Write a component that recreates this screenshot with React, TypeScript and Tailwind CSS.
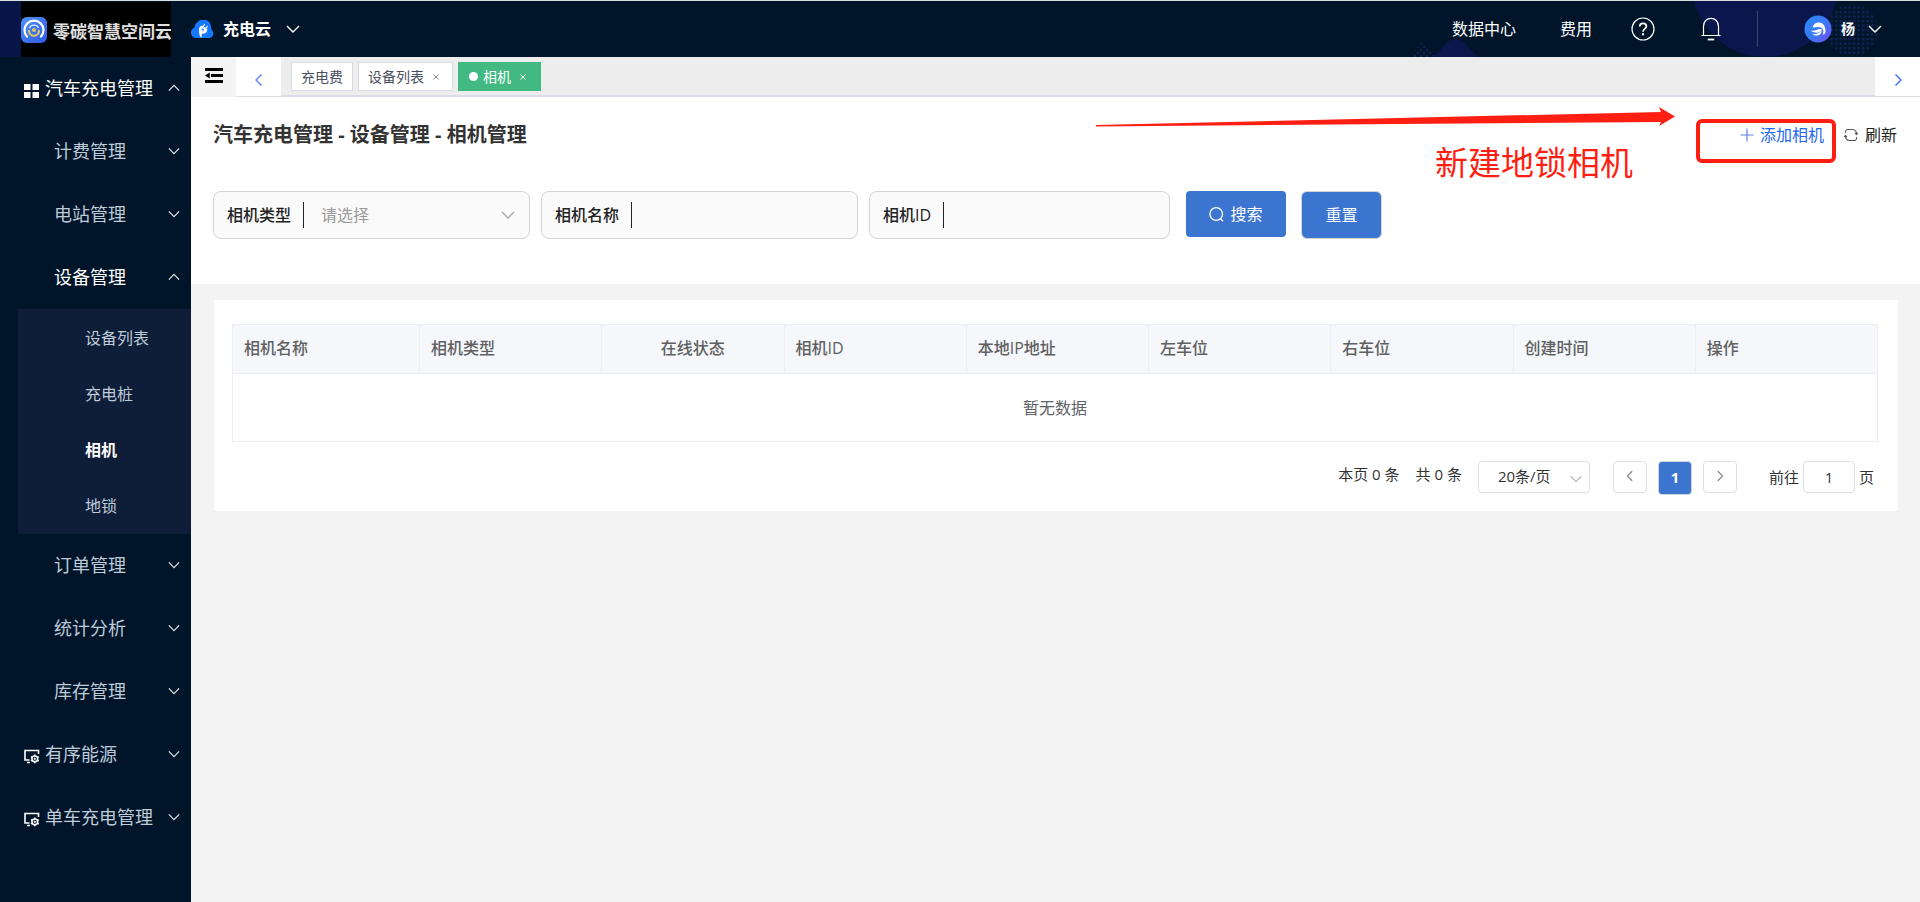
import type { ReactNode } from "react";

type IconProps = { className?: string };

function Chevron({ dir = "down", className = "" }: IconProps & { dir?: "down" | "up" | "left" | "right" }) {
  const d = {
    down: "M1 4 7 10l6-6",
    up: "M1 10 7 4l6 6",
    left: "M9.5 1.5 4 7l5.5 5.5",
    right: "M4.5 1.5 10 7l-5.5 5.5",
  }[dir];
  return (
    <svg viewBox="0 0 14 14" fill="none" stroke="currentColor" strokeWidth="1.4" className={className} aria-hidden="true">
      <path d={d} />
    </svg>
  );
}

function BrandMark() {
  return (
    <svg viewBox="0 0 26 26" className="size-[26px] shrink-0" aria-hidden="true">
      <defs>
        <linearGradient id="brand" x1="0" y1="0" x2="1" y2="1">
          <stop offset="0" stopColor="#4f93f8" />
          <stop offset="1" stopColor="#2f5be6" />
        </linearGradient>
      </defs>
      <rect width="26" height="26" rx="6" fill="url(#brand)" />
      <path d="M6 19.600A9.5 9.5 0 1 1 20 19.600" fill="none" stroke="#fff" strokeWidth="2.200" strokeLinecap="round" />
      <path d="M8.400 11a5.200 5.200 0 0 1 9.200 0" fill="none" stroke="#dfe8ff" strokeWidth="1.300" />
      <path d="M8 13.800a5 5 0 0 0 10 0" fill="none" stroke="#e8c55c" strokeWidth="2.200" strokeLinecap="round" />
      <circle cx="13" cy="13" r="1.900" fill="#f0c954" />
    </svg>
  );
}

function CloudPlug() {
  return (
    <svg viewBox="0 0 23 19" className="h-[19px] w-[23px] shrink-0" aria-hidden="true">
      <path d="M5.500 18A5.300 5.300 0 0 1 3.300 7.800 C4 4.500 5 3 6.500 2.300 A7.500 7.500 0 0 1 19.800 5.800 C20 8.500 20.500 9.500 21.700 11.200 A4.500 4.500 0 0 1 18.500 18Z" fill="#1677ff" />
      <path d="M8 9.500c0-2.700 1.800-4.100 3.900-3.700l4.300 2.900c.4 3-1.600 5.100-3.800 4.800-1.600-.2-1.800.6-1.800 4.200-1.800-.7-2.600-4-2.600-8.200Z" fill="#fff" />
      <path d="m12.500 6 1.300-2m1.400 4 1.500-2" stroke="#fff" strokeWidth="1.200" fill="none" />
      <path d="m12.600 7.400-1.800 2.100 1.900.1-1.200 1.800" stroke="#1677ff" strokeWidth=".8" fill="none" />
    </svg>
  );
}

function HelpIcon() {
  return (
    <svg viewBox="0 0 24 24" className="size-6" fill="none" stroke="#fff" strokeWidth="1.200" aria-hidden="true">
      <circle cx="12" cy="12" r="11" />
      <path d="M8.700 9.500C8.700 7.500 10 6.300 12 6.300s3.400 1.200 3.400 3c0 2.500-3.400 2.700-3.400 5.400" strokeWidth="1.700" />
      <circle cx="12" cy="17.300" r=".6" fill="#fff" />
    </svg>
  );
}

function BellIcon() {
  return (
    <svg viewBox="0 0 20 24" className="h-6 w-5" fill="none" stroke="#fff" strokeWidth="1.200" aria-hidden="true">
      <path d="M2.500 18.500V9.500C2.500 4.500 5.800 1.300 10 1.300s7.500 3.200 7.500 8.200v9M.5 18.500h19" />
      <path d="M6.700 22.500h6.600" strokeWidth="1.800" />
    </svg>
  );
}

function Avatar() {
  return (
    <svg viewBox="0 0 28 28" className="size-7" aria-hidden="true">
      <defs>
        <linearGradient id="avatar" x1="0" y1="0" x2="1" y2=".8">
          <stop offset="0" stopColor="#2d8bfa" />
          <stop offset=".6" stopColor="#3b78f8" />
          <stop offset="1" stopColor="#6c52f0" />
        </linearGradient>
      </defs>
      <circle cx="14" cy="14" r="13.500" fill="url(#avatar)" />
      <path d="M8.500 12.500C9.500 9 12 7.300 15 7.500c4.500.2 6.800 4 6.500 9.500-.4 1.900-1.500 2.500-2.600 2.500 1-3.500.5-6-1.900-7-2.500-1-5-.6-8.500 0Z" fill="#fff" />
      <path d="M6.500 15.500c4.500 1.300 7.500-2.500 11.500-1.200-1 3.500-6.500 5-11.500 1.200Z" fill="#fff" />
      <path d="M8 19c3.500.9 7-.6 9.500-3.300.8 3.500-4.500 6.800-9.500 3.300Z" fill="#fff" />
    </svg>
  );
}

function GridIcon() {
  return (
    <svg viewBox="0 0 15 15" className="size-[15px]" fill="#fff" aria-hidden="true">
      <path d="M0 1h6.500v6H0zM8.500 1H15v6H8.500zM0 9h6.500v6H0zM8.500 9H15v6H8.500z" />
    </svg>
  );
}

function MonitorGearIcon() {
  return (
    <svg viewBox="0 0 16 15" className="h-[15px] w-4" fill="none" stroke="#fff" aria-hidden="true">
      <path d="M5.500 11H1V1.500h13.500V5M3 13.500h3" strokeWidth="1.600" />
      <circle cx="10.800" cy="9.800" r="2.900" strokeWidth="1.500" />
      <circle cx="10.800" cy="9.800" r=".9" fill="#fff" strokeWidth=".5" />
      <path d="M10.800 5.500v1.500M10.800 12.600v1.700M7 7.700l1.300.8M13.300 11.100l1.400.9M7 12l1.300-.9M13.300 8.500l1.400-.8" strokeWidth="1.500" />
    </svg>
  );
}

function FoldIcon() {
  return (
    <svg viewBox="0 0 18 15" className="h-[15px] w-[18px]" fill="#000" aria-hidden="true">
      <path d="M0 0h18v3H0zM6 6h12v3H6zM0 12h18v3H0zM0 7.500l4.800-3v6z" />
    </svg>
  );
}

function HeaderArt() {
  return (
    <svg className="pointer-events-none absolute top-0 right-0 h-14 w-[520px]" viewBox="-20 0 520 56" aria-hidden="true">
      <defs>
        <pattern id="dots" width="4.500" height="4.500" patternUnits="userSpaceOnUse">
          <rect x="1" y="1" width="2.300" height="2.300" fill="#13245c" />
        </pattern>
        <pattern id="dotsAlt" width="6" height="6" patternUnits="userSpaceOnUse">
          <path d="M0 0h2v2H0zM3 3h2v2H3z" fill="#141f5a" />
        </pattern>
      </defs>
      <circle cx="345" cy="-17" r="73" fill="#0a164c" />
      <circle cx="432" cy="29" r="26" fill="url(#dots)" />
      <path d="M-10 56 2 41 16 56Z" fill="url(#dotsAlt)" />
      <path d="M12 56C23 50 25 38 35 38s15 12 24 18Z" fill="#0a164c" />
    </svg>
  );
}

function Header() {
  return (
    <header className="relative flex h-[57px] shrink-0 items-stretch border-t border-[#d5dfe2] bg-[#001529] text-white">
      <HeaderArt />
      <div className="w-[21px] bg-[#081548]" />
      <div className="mt-px flex w-[150px] items-center overflow-hidden bg-black">
        <BrandMark />
        <span className="ml-1.5 pt-1 text-[17px] leading-6 font-bold whitespace-nowrap text-[#e0e0e0]">零碳智慧空间云</span>
      </div>
      <button type="button" className="ml-5 flex items-center">
        <CloudPlug />
        <span className="ml-[9px] text-base leading-6 font-bold">充电云</span>
        <Chevron className="ml-[15px] size-3.5" />
      </button>
      <nav className="relative ml-auto flex items-center pr-[38px]">
        <a href="#data" className="text-base leading-6">数据中心</a>
        <a href="#fee" className="ml-11 text-base leading-6">费用</a>
        <button type="button" aria-label="帮助" className="ml-[39px]"><HelpIcon /></button>
        <button type="button" aria-label="通知" className="ml-[46px]"><BellIcon /></button>
        <span className="ml-9 h-9 w-px bg-[#3a4568]" />
        <button type="button" className="ml-[46px] flex items-center">
          <Avatar />
          <span className="ml-[9px] text-sm leading-6 font-bold">杨</span>
          <Chevron className="ml-[13px] size-3.5" />
        </button>
      </nav>
    </header>
  );
}

function MenuItem({ label, icon, open = false, active = false }: { label: string; icon?: ReactNode; open?: boolean; active?: boolean }) {
  return (
    <button
      type="button"
      aria-expanded={open}
      className={`flex h-[63px] w-full items-center pr-[11px] pb-0.5 text-lg leading-7 ${icon ? "pl-6" : "pl-[54px]"} ${active ? "text-white" : "text-[#bfcbd9]"}`}
    >
      {icon && <span className="flex w-[21px] pt-1.5">{icon}</span>}
      <span className="whitespace-nowrap">{label}</span>
      <Chevron dir={open ? "up" : "down"} className="ml-auto size-3 text-[#dfe3e7]" />
    </button>
  );
}

const deviceMenu = ["设备列表", "充电桩", "相机", "地锁"];

function Sidebar() {
  return (
    <nav className="w-[191px] shrink-0 bg-[#001529]">
      <MenuItem label="汽车充电管理" icon={<GridIcon />} open active />
      <MenuItem label="计费管理" />
      <MenuItem label="电站管理" />
      <MenuItem label="设备管理" open active />
      <ul className="ml-[18px] bg-[#0e1d38] pt-px">
        {deviceMenu.map((label) => (
          <li key={label}>
            <a
              href="#device"
              className={`flex h-14 items-center pl-[67px] text-base leading-6 ${label === "相机" ? "font-bold text-white" : "text-[#bfcbd9]"}`}
            >
              {label}
            </a>
          </li>
        ))}
      </ul>
      <MenuItem label="订单管理" />
      <MenuItem label="统计分析" />
      <MenuItem label="库存管理" />
      <MenuItem label="有序能源" icon={<MonitorGearIcon />} />
      <MenuItem label="单车充电管理" icon={<MonitorGearIcon />} />
    </nav>
  );
}

function TabsBar() {
  return (
    <div className="flex h-10 bg-[#ededed]">
      <button type="button" aria-label="收起菜单" className="flex w-[45px] justify-center bg-[#f4f4f4] pt-[11px]"><FoldIcon /></button>
      <button type="button" aria-label="向左" className="flex w-[45px] items-center justify-center border-b border-[#dddddd] bg-white pt-1.5 text-[#5b7ff5]">
        <Chevron dir="left" className="size-3.5" />
      </button>
      <div className="flex flex-1 items-start gap-[5px] border-b-2 border-[#dcdce8] pt-[5px] pl-2.5 text-sm leading-5">
        <a href="#fee" className="flex h-[29px] items-center border border-[#d8dce5] bg-white px-[9px] text-[#495060]">充电费</a>
        <span className="flex h-[29px] items-center border border-[#d8dce5] bg-white pr-3 pl-[9px] text-[#495060]">
          <a href="#list">设备列表</a>
          <button type="button" aria-label="关闭设备列表" className="ml-2 text-[#888888]"><CloseMark /></button>
        </span>
        <span className="flex h-[29px] items-center bg-[#42b983] pr-3.5 pl-[11px] text-white">
          <span className="mr-[5px] size-[9px] rounded-full bg-white" />
          <a href="#camera">相机</a>
          <button type="button" aria-label="关闭相机" className="ml-2"><CloseMark /></button>
        </span>
      </div>
      <button type="button" aria-label="向右" className="flex w-[45px] items-center justify-center border-b border-[#dddddd] bg-white pt-1.5 text-[#3d6df5]">
        <Chevron dir="right" className="size-3.5" />
      </button>
    </div>
  );
}

function CloseMark() {
  return (
    <svg viewBox="0 0 8 8" className="size-2" stroke="currentColor" strokeWidth="1" aria-hidden="true">
      <path d="m1.500 1.500 5 5m0-5-5 5" />
    </svg>
  );
}

const fieldBox = "flex h-12 items-center rounded-lg border border-[#d4d4d4] bg-[#fafafa] pl-[13px]";
const fieldLabel = "text-base leading-6 font-medium whitespace-nowrap text-[#222222]";

function FieldRule() {
  return <span className="ml-3 h-[26px] w-px shrink-0 bg-[#222222]" />;
}

function SearchForm() {
  return (
    <form className="mt-10 flex flex-wrap items-start gap-[11px]" onSubmit={(e) => e.preventDefault()}>
      <div className={`${fieldBox} w-[317px]`}>
        <label htmlFor="type" className={fieldLabel}>相机类型</label>
        <FieldRule />
        <div className="relative flex flex-1 items-center">
          <select id="type" defaultValue="" className="w-full appearance-none bg-transparent pl-[17px] text-base leading-6 text-[#999999] outline-none">
            <option value="">请选择</option>
          </select>
          <Chevron className="pointer-events-none absolute right-3.5 size-3.5 text-[#aaaaaa]" />
        </div>
      </div>
      <div className={`${fieldBox} w-[317px]`}>
        <label htmlFor="name" className={fieldLabel}>相机名称</label>
        <FieldRule />
        <input id="name" className="min-w-0 flex-1 bg-transparent px-4 text-base outline-none" />
      </div>
      <div className={`${fieldBox} w-[301px]`}>
        <label htmlFor="camera-id" className={fieldLabel}>相机ID</label>
        <FieldRule />
        <input id="camera-id" className="min-w-0 flex-1 bg-transparent px-4 text-base outline-none" />
      </div>
      <div className="ml-[5px] flex items-start gap-[15px]">
        <button type="submit" className="flex h-[46px] w-[100px] items-center justify-center gap-1.5 rounded bg-[#3c75d0] text-base leading-6 text-white">
          <svg viewBox="0 0 15 15" className="size-[15px]" fill="none" stroke="#fff" strokeWidth="1.300" aria-hidden="true">
            <circle cx="7.200" cy="7" r="6.300" />
            <path d="m11.300 11.500 2.700 2.700" />
          </svg>
          搜索
        </button>
        <button type="reset" className="h-12 w-[81px] rounded-md border border-[#d4d4d4] bg-[#3c75d0] text-base leading-6 text-white">重置</button>
      </div>
    </form>
  );
}

function Toolbar() {
  return (
    <section className="relative h-[187px] bg-white pt-[22px] pr-[23px] pl-[22px]">
      <div className="flex h-8 items-center">
        <h1 className="text-xl leading-7 font-bold text-[#333333]">汽车充电管理 - 设备管理 - 相机管理</h1>
        <div className="ml-auto flex items-center text-base leading-6">
          <div className="relative">
            <button type="button" className="flex items-center gap-1.5 text-[#1e68f0]">
              <svg viewBox="0 0 14 14" className="size-3.5" stroke="#5d83ee" strokeWidth="1.200" aria-hidden="true">
                <path d="M7 .5v13M.5 7h13" />
              </svg>
              添加相机
            </button>
            <span className="pointer-events-none absolute -top-1 -right-3 h-11 w-[140px] rounded-md border-4 border-[#ff1f12]" />
          </div>
          <button type="button" className="ml-5 flex items-center gap-[7px] text-[#222222]">
            <svg viewBox="0 0 14 14" className="size-3.5" fill="none" stroke="#555" strokeWidth="1.100" aria-hidden="true">
              <path d="M4 1.500h4.500A4 4 0 0 1 12.500 6M1.500 5V3.800A2.300 2.300 0 0 1 4 1.500M1.500 8a4 4 0 0 0 4 4.500H10A2.300 2.300 0 0 0 12.500 10V9M11 5l1.500 1.500L14 5M0 9l1.500-1.500L3 9" />
            </svg>
            刷新
          </button>
        </div>
      </div>
      <div className="pointer-events-none absolute top-2.5 right-[245px] flex w-[580px] flex-col">
        <svg viewBox="0 0 580 20" className="h-5 w-full" aria-hidden="true">
          <path d="M1 18 566 5 564 0 580 9.500 564 19 566 15 1 19.500Z" fill="#ff1f12" />
        </svg>
        <span className="mr-[42px] self-end text-[33px] leading-[72px] text-[#ff1f12]">新建地锁相机</span>
      </div>
      <SearchForm />
    </section>
  );
}

const columns = ["相机名称", "相机类型", "在线状态", "相机ID", "本地IP地址", "左车位", "右车位", "创建时间", "操作"];

function CameraTable() {
  return (
    <table className="w-full table-fixed border-collapse border border-[#ebeef5] text-base leading-6">
      <colgroup>
        {columns.map((c, i) => (
          <col key={c} className={i === 0 ? "w-[187px]" : ""} />
        ))}
      </colgroup>
      <thead>
        <tr className="h-[49px] bg-[#f5f7fb] text-[#606060]">
          {columns.map((c) => (
            <th key={c} className={`border border-[#ebeef5] px-[11px] pb-0.5 font-medium ${c === "在线状态" ? "text-center" : "text-left"}`}>{c}</th>
          ))}
        </tr>
      </thead>
      <tbody>
        <tr className="h-[68px]">
          <td colSpan={columns.length} className="text-center text-[#606266]">暂无数据</td>
        </tr>
      </tbody>
    </table>
  );
}

function Pagination() {
  const box = "flex h-8 w-[34px] items-center justify-center rounded-sm border border-[#dcdfe6] text-[#888888]";
  return (
    <div className="mt-[19px] flex items-start justify-end pr-1 text-[15px] leading-[26px] text-[#333333]">
      <span>本页 0 条</span>
      <span className="ml-4">共 0 条</span>
      <div className="relative ml-4 flex h-8 w-28 items-center">
        <select aria-label="每页条数" className="h-full w-full appearance-none rounded border border-[#dcdfe6] bg-white pb-0.5 pl-[19px] text-[15px] outline-none">
          <option>20条/页</option>
        </select>
        <Chevron className="pointer-events-none absolute top-3 right-2 size-3 text-[#b0b4bc]" />
      </div>
      <button type="button" aria-label="上一页" className={`${box} ml-[23px] pb-0.5`}><Chevron dir="left" className="size-3" /></button>
      <button type="button" aria-current="page" className="ml-[11px] h-[34px] w-[34px] rounded-sm border border-[#ccd3e0] bg-[#3c75d0] pb-0.5 font-bold text-white">1</button>
      <button type="button" aria-label="下一页" className={`${box} ml-[11px] pb-0.5`}><Chevron dir="right" className="size-3" /></button>
      <label className="ml-8 flex h-8 items-center">
        前往
        <input defaultValue="1" className="mx-1 h-8 w-[52px] rounded border border-[#dcdfe6] text-center outline-none" />
        页
      </label>
    </div>
  );
}

export default function App() {
  return (
    <div className="flex min-h-screen flex-col bg-[#f3f3f3] font-['Open_Sans','Noto_Sans_CJK_SC',sans-serif]">
      <Header />
      <div className="flex flex-1">
        <Sidebar />
        <main className="min-w-0 flex-1">
          <TabsBar />
          <Toolbar />
          <section className="mt-4 mr-[22px] ml-[23px] bg-white pt-6 pr-5 pb-4 pl-[18px]">
            <CameraTable />
            <Pagination />
          </section>
        </main>
      </div>
    </div>
  );
}
